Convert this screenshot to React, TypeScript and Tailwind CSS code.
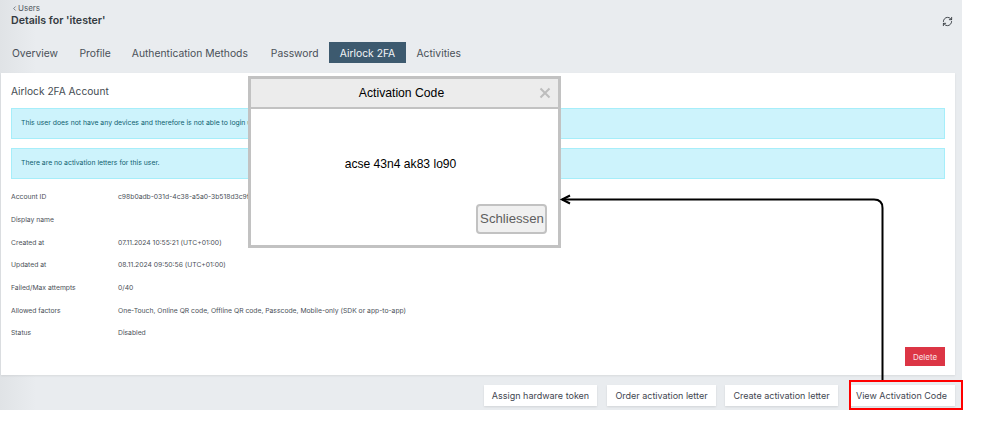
import { RefreshCw, ChevronLeft } from "lucide-react";

const font = "font-['Inter','Liberation_Sans',sans-serif]";

const rows: [string, string][] = [
  ["Account ID", "c98b0adb-031d-4c38-a5a0-3b518d3c9f21"],
  ["Display name", ""],
  ["Created at", "07.11.2024 10:55:21 (UTC+01:00)"],
  ["Updated at", "08.11.2024 09:50:56 (UTC+01:00)"],
  ["Failed/Max attempts", "0/40"],
  ["Allowed factors", "One-Touch, Online QR code, Offline QR code, Passcode, Mobile-only (SDK or app-to-app)"],
  ["Status", "Disabled"],
];

const tabs = [
  { label: "Overview", cls: "pl-[12px] pr-[11px]" },
  { label: "Profile", cls: "px-[10.5px]" },
  { label: "Authentication Methods", cls: "pl-[10.5px] pr-[12.5px]" },
  { label: "Password", cls: "px-[10.5px]" },
  { label: "Airlock 2FA", cls: "" },
  { label: "Activities", cls: "px-[10.5px]" },
];
const actions = [
  { label: "Assign hardware token", cls: "w-[113px]" },
  { label: "Order activation letter", cls: "ml-[10px] w-[109px]" },
  { label: "Create activation letter", cls: "ml-[9px] w-[113px]" },
  { label: "View Activation Code", cls: "ml-[12px] w-[105px] pr-[2px]" },
];

function Alert({ text }: { text: string }) {
  return (
    <div className="flex h-[31px] items-center border border-[#a6eefa] bg-[#cdf3fc] pl-[9px] text-[6.85px] text-[#0f5f70]">{text}</div>
  );
}

export default function App() {
  return (
    <div className={`relative h-[430px] w-[981px] overflow-hidden bg-white ${font}`}>
      <div className="flex h-[410px] w-[962px] flex-col bg-[linear-gradient(90deg,#e0e3e6,#e9ecef_36px)] text-[#3f4650]">
        <div className="flex h-[42px] shrink-0 items-start justify-between pl-[11px] pr-[9px] pt-[3px]">
          <div>
            <div className="flex h-[10px] items-center text-[8px] leading-[10px] text-[#555c64]">
              <ChevronLeft size={7} strokeWidth={2.5} />
              <span>Users</span>
            </div>
            <div className="mt-[1px] text-[10.6px] font-semibold leading-[14px] text-[#343a40]">Details for 'itester'</div>
          </div>
          <RefreshCw size={11} strokeWidth={2} className="mt-[13px] text-[#343a40]" />
        </div>
        <div className="flex h-[21px] shrink-0 items-stretch pt-[2px] text-[10.3px]">
          {tabs.map((t) => (
            <div
              key={t.label}
              className={
                t.label === "Airlock 2FA"
                  ? "-mt-[2px] flex w-[77px] items-center justify-center bg-[#3d5a6f] pt-[2px] text-[#f2f5f7]"
                  : `flex items-center ${t.cls} text-[#4a5058]`
              }
            >
              {t.label}
            </div>
          ))}
        </div>
        <div className="mt-[10px] ml-[1px] flex h-[302px] w-[954px] shrink-0 flex-col bg-white px-[10px] pt-[11px] shadow-[0_1px_2px_rgba(0,0,0,0.08)]">
          <div className="text-[10.2px] leading-[14px] text-[#444b52]">Airlock 2FA Account</div>
          <div className="mt-[10px] flex flex-col gap-[9px]">
            <Alert text="This user does not have any devices and therefore is not able to login using Airlock 2FA." />
            <Alert text="There are no activation letters for this user." />
          </div>
          <div className="mt-[7px] flex flex-col text-[6.77px] text-[#4a5058]">
            {rows.map(([k, v]) => (
              <div key={k} className="flex h-[22.67px] items-center">
                <div className="w-[107px] shrink-0">{k}</div>
                <div>{v}</div>
              </div>
            ))}
          </div>
          <div className="mt-auto mb-[9px] flex justify-end">
            <div className="flex h-[19px] w-[40px] items-center justify-center bg-[#dc3545] text-[8px] text-[#fbe3e5]">Delete</div>
          </div>
        </div>
        <div className="flex flex-1 items-start justify-end pr-[7px] pt-[10px]">
          {actions.map((a) => (
            <div
              key={a.label}
              className={`${a.cls} flex h-[21px] items-center justify-center bg-white text-[9px] text-[#3f4650] shadow-[0_1px_2px_rgba(0,0,0,0.1)]`}
            >
              {a.label}
            </div>
          ))}
        </div>
      </div>

      {/* Annotation overlay */}
      <div className="absolute left-[248px] top-[76px] flex h-[172px] w-[313px] flex-col border-[3px] border-[#c2c2c2] bg-white font-['Liberation_Sans',sans-serif]">
        <div className="relative flex h-[30px] shrink-0 items-center justify-center border-b-2 border-[#c2c2c2] bg-[#ececec] pr-[6px] text-[12.2px] text-black">
          Activation Code
          <svg className="absolute right-[7px] top-[8px]" width="12" height="12" viewBox="0 0 12 12">
            <path d="M1.5 1.5 L10.5 10.5 M10.5 1.5 L1.5 10.5" stroke="#bdbdbd" strokeWidth="2" />
          </svg>
        </div>
        <div className="flex h-[62px] items-end justify-center pr-[8px] text-[12.1px] leading-[14px] text-black">acse 43n4 ak83 lo90</div>
        <div className="mt-auto mb-[11px] mr-[11px] flex justify-end">
          <div className="flex h-[30px] w-[71px] items-center justify-center rounded-[4px] border-2 border-[#c2c2c2] bg-[#f0f0f0] pl-[1px] text-[13.2px] text-[#5e5e5e]">Schliessen</div>
        </div>
      </div>

      <svg className="pointer-events-none absolute left-0 top-0" width="981" height="430" fill="none">
        <path d="M882.5 380 V208 Q882.5 199.5 874 199.5 H562" stroke="#000" strokeWidth="2" />
        <path d="M570 195.5 L562 199.5 L570 203.5" stroke="#000" strokeWidth="2" />
      </svg>

      <div className="absolute left-[849px] top-[380px] h-[30px] w-[114px] border-2 border-[#ff0000]" />
    </div>
  );
}
